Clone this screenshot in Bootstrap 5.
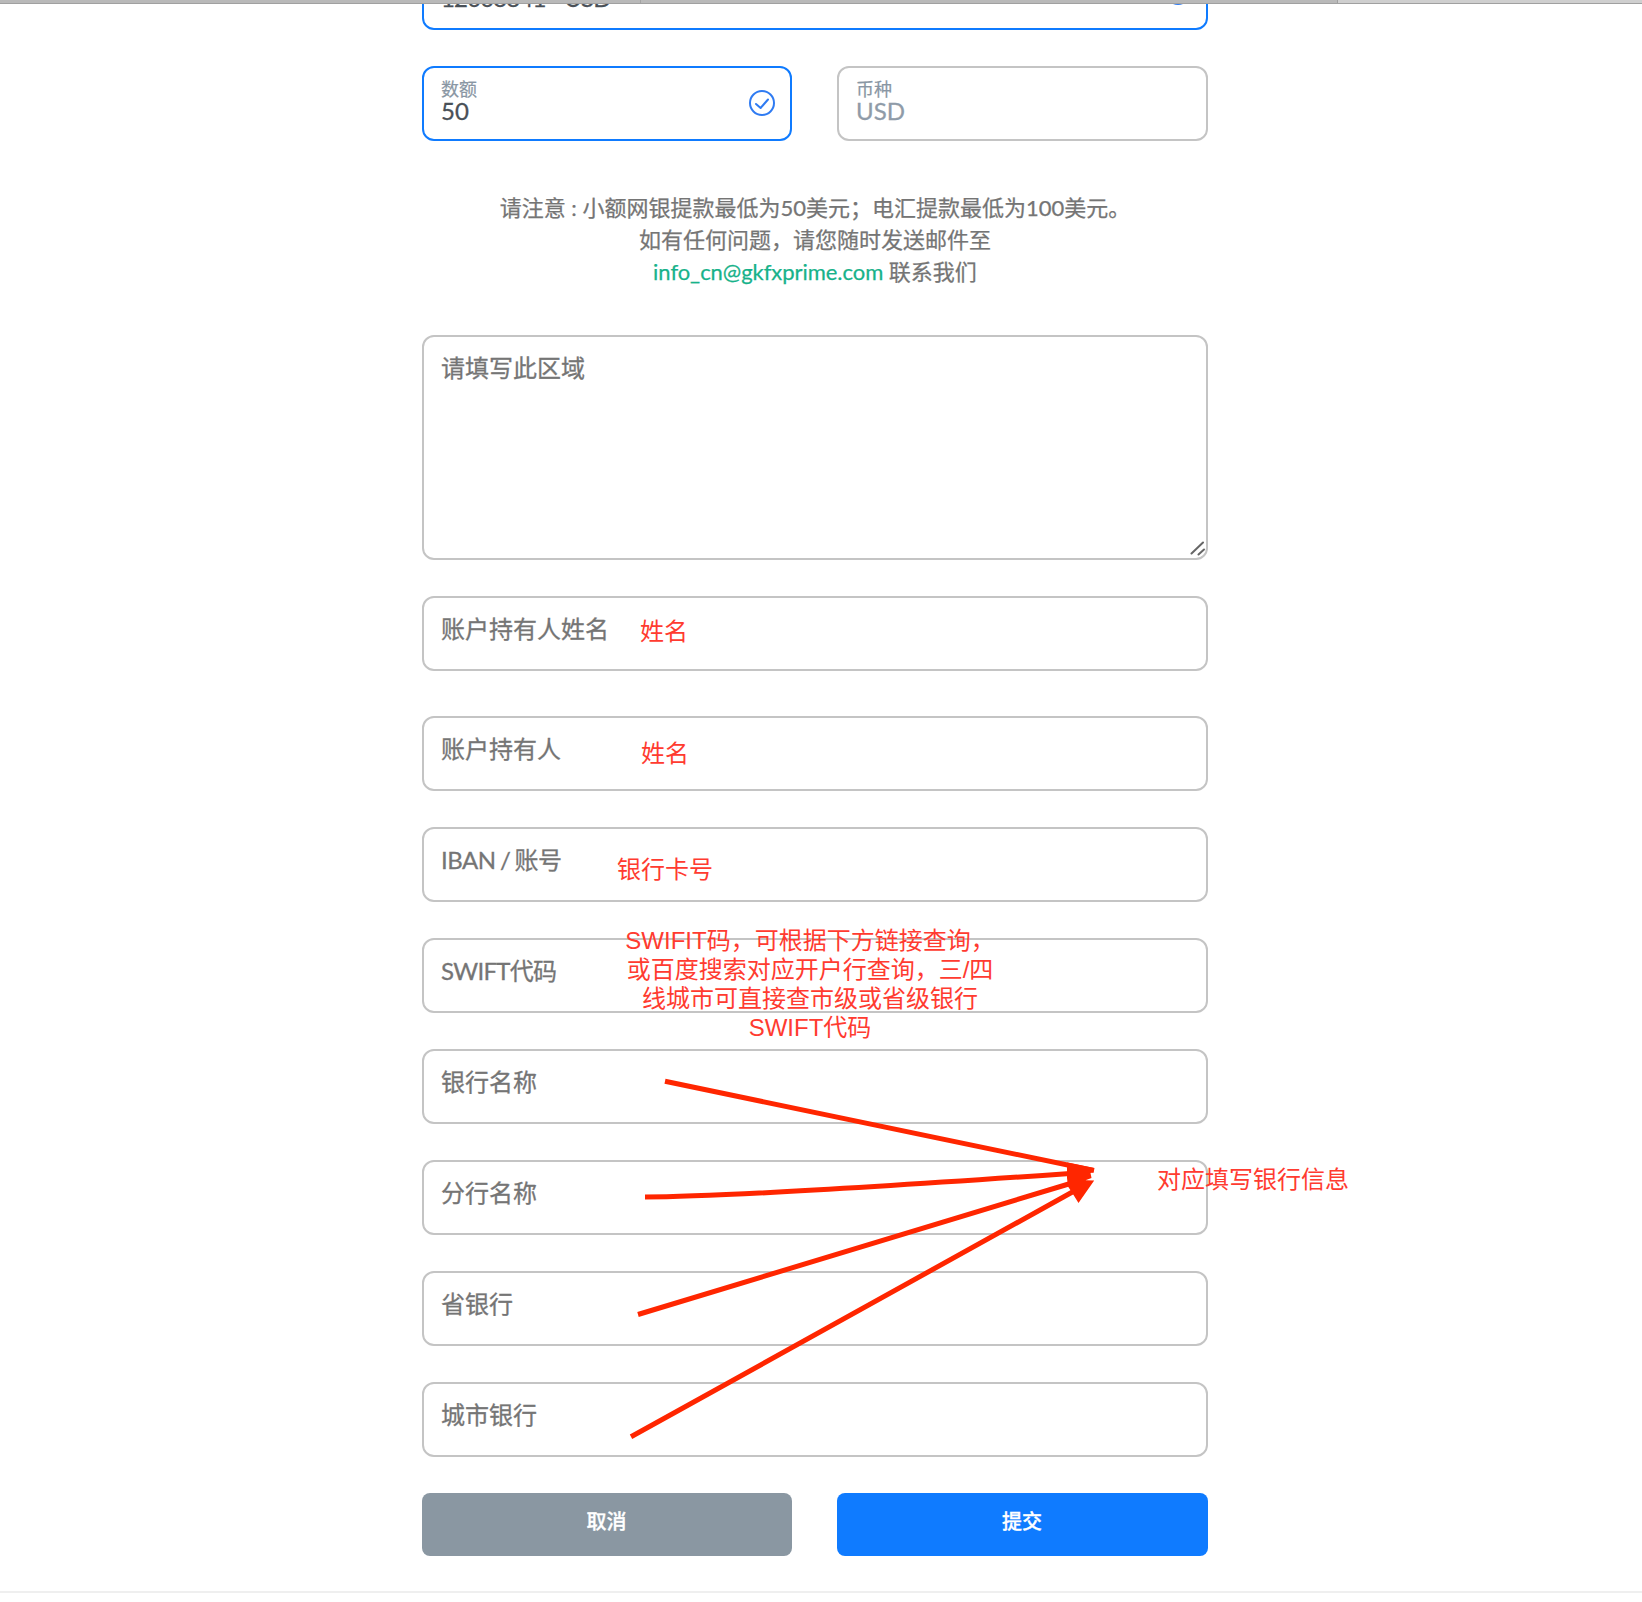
<!DOCTYPE html>
<html lang="zh-CN">
<head>
<meta charset="utf-8">
<meta name="viewport" content="width=device-width, initial-scale=1">
<title>提款</title>
<link href="https://cdn.jsdelivr.net/npm/bootstrap@5.3.0/dist/css/bootstrap.min.css" rel="stylesheet">
<style>
body{font-family:Lato,"Noto Sans CJK SC",sans-serif;background:#fff;overflow:hidden}
.page-area{height:1602px;overflow:hidden}
.form-col{width:786px;margin-left:422px}
.top-strip{height:4px;background:#b9b9b9;border-bottom:1px solid #a0a0a0;z-index:3}
.top-strip .tab-now{width:305px;background:#cfcfcf;border-left:1px solid #a0a0a0}
.top-strip .tab-old{width:641px;border-right:1px solid #a4a4a4}
.field{height:75px;border:2px solid #c4c4c4;border-radius:12px;padding:0 17px;background:#fff}
input.field,textarea.field{font-size:24px;line-height:36px;color:#495057}
input.field{padding-bottom:10px}
.field::placeholder{color:#757575;opacity:1;-webkit-text-stroke:.3px #757575}
.field-ok{border-color:#0f7bff}
.field-icon{padding-right:15px}
.field-lead{height:75px;margin-top:-49px}
.field-lead .val{padding-top:11px;letter-spacing:-.85px}
.field-lead svg{margin-bottom:2px}
.pair{padding-bottom:5px}
.cap{font-size:18px;line-height:20px;color:#8996a3;-webkit-text-stroke:.2px #8996a3}
.val{font-size:24px;line-height:24px;color:#495057;-webkit-text-stroke:.3px #495057}
.val-off{color:#8f9ba8;-webkit-text-stroke-color:#8f9ba8}
.split{gap:45px}
.half-a{flex:0 0 370px}
.half-b{flex:1 1 0}
.notice{font-size:22px;line-height:32px;color:#757575;margin-top:51px;-webkit-text-stroke:.25px}
.notice a{color:#17b28a;text-decoration:none;letter-spacing:-.05px}
textarea.field{height:225px;padding-top:13px;resize:none}
.iban::placeholder{letter-spacing:-.5px;word-spacing:-1.3px}
.swift::placeholder{letter-spacing:-.7px}
.grip{right:3px;bottom:4px}
.stack{gap:36px}
.holder{margin-top:9px}
.act{height:63px;border:0;border-radius:8px;font-size:20px;font-weight:500;color:#fff;padding:0 1px 8px 0;-webkit-text-stroke:.3px #fff}
.act-cancel,.act-cancel:hover{background:#8a97a2;color:#fff}
.act-send,.act-send:hover{background:#0f7bff;color:#fff}
.foot-line{height:2px;background:#efefef;margin-top:35px}
.memo{font:24px/29px "Liberation Sans","Noto Sans CJK SC",sans-serif;color:#ff3b30;white-space:nowrap}
.memo-a{left:640px;top:617px}.memo-b{left:641px;top:739px}.memo-c{left:617px;top:855px}
.memo-d{left:611px;top:926px;width:398px}.memo-e{left:1157px;top:1165px}
</style>
<script src="https://cdn.jsdelivr.net/npm/bootstrap@5.3.0/dist/js/bootstrap.bundle.min.js"></script>
</head>
<body>
<div class="page-area position-relative">
  <div class="top-strip d-flex justify-content-between position-relative"><div class="tab-old"></div><div class="tab-now"></div></div>
  <main class="form-col">
    <div class="field field-ok field-icon field-lead d-flex align-items-center justify-content-between">
      <span class="val">12003841 - USD</span>
      <svg width="26" height="26" viewBox="0 0 26 26" fill="none" stroke="#2f7bf2" stroke-width="2"><circle cx="13" cy="13" r="12"/><path d="M7 14l4.600 4L19 9.500"/></svg>
    </div>
    <div class="split d-flex" style="margin-top:36px">
      <div class="field field-ok field-icon half-a d-flex align-items-center justify-content-between">
        <div class="pair"><div class="cap">数额</div><div class="val">50</div></div>
        <svg style="margin-bottom:2px" width="26" height="26" viewBox="0 0 26 26" fill="none" stroke="#2f7bf2" stroke-width="2" stroke-linecap="round" stroke-linejoin="round"><circle cx="13" cy="13" r="12"/><path d="M7 14l4.600 4L19 9.500"/></svg>
      </div>
      <div class="field half-b d-flex align-items-center">
        <div class="pair"><div class="cap">币种</div><div class="val val-off">USD</div></div>
      </div>
    </div>
    <div class="notice text-center">
      <div>请注意 : 小额网银提款最低为50美元；电汇提款最低为100美元。</div>
      <div>如有任何问题，请您随时发送邮件至</div>
      <div><a href="#">info_cn@gkfxprime.com</a> 联系我们</div>
    </div>
    <div class="position-relative" style="margin-top:47px">
      <textarea class="field form-control d-block" placeholder="请填写此区域"></textarea>
      <svg class="grip position-absolute" width="15" height="15" viewBox="0 0 15 15" stroke="#666" stroke-width="2" stroke-linecap="round"><path d="M1.500 12.500L13 1.500M8.500 13.500L14 8.500"/></svg>
    </div>
    <form class="stack d-flex flex-column" style="margin-top:36px" onsubmit="return false">
      <input class="field form-control" placeholder="账户持有人姓名">
      <input class="field holder form-control" placeholder="账户持有人">
      <input class="field iban form-control" placeholder="IBAN / 账号">
      <input class="field swift form-control" placeholder="SWIFT代码">
      <input class="field form-control" placeholder="银行名称">
      <input class="field form-control" placeholder="分行名称">
      <input class="field form-control" placeholder="省银行">
      <input class="field form-control" placeholder="城市银行">
      <div class="split d-flex">
        <button type="button" class="btn act act-cancel half-a">取消</button>
        <button type="submit" class="btn act act-send half-b">提交</button>
      </div>
    </form>
  </main>
  <div class="foot-line"></div>

  <!-- red handwritten guidance laid over the form -->
  <div class="memo memo-a position-absolute">姓名</div>
  <div class="memo memo-b position-absolute">姓名</div>
  <div class="memo memo-c position-absolute">银行卡号</div>
  <div class="memo memo-d position-absolute text-center">SWIFIT码，可根据下方链接查询，<br>或百度搜索对应开户行查询，三/四<br>线城市可直接查市级或省级银行<br>SWIFT代码</div>
  <div class="memo memo-e position-absolute">对应填写银行信息</div>
  <svg class="position-absolute top-0 start-0 pe-none" width="1642" height="1602" fill="none" stroke="#ff2600" stroke-width="5">
    <path d="M665 1081.300L1094 1170.500M645 1197Q735 1197 1070 1173.500M638 1314.500L1072 1183M631 1436.800L1076 1190"/>
    <path fill="#ff2600" stroke="none" d="M1067 1162.500L1094 1168l-.5 3.800-3 1.200 1 5-6 2.200 8.700.2-15.700 22.600-6.500-10.500-4-6-1-8.500z"/>
  </svg>
</div>
</body>
</html>
